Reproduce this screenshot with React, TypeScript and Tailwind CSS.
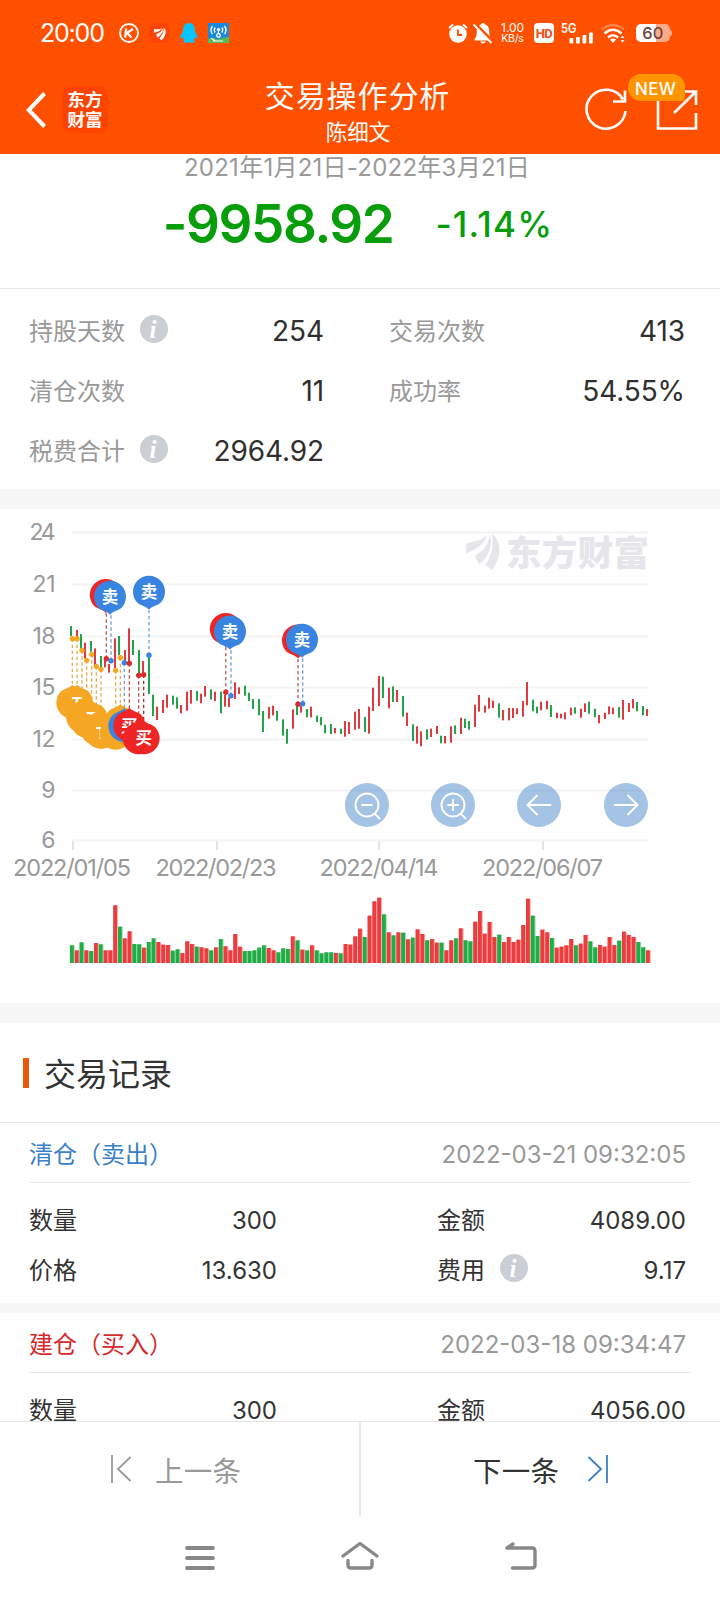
import React from "react";

type Tone = "r" | "g";
type Candle = [number, Tone, number, number];

const RED = "#e0393e";
const GREEN = "#22a548";

/* x, tone, high and low of every day, in chart pixels */
const parse = (src: string, ox: number, oy: number): Candle[] =>
  src.split(" ").map((s) => {
    const [x, tone, a, b] = s.split(",");
    return [ox + +x / 3, tone as Tone, oy + +a / 3, oy + +b / 3];
  });

const candles: Candle[] = [
  ...parse(
    "93,g,198,228 111,r,210,235 123,g,222,265 135,r,248,295 153,g,243,275 165,r,265,315 183,g,288,322 195,r,300,322 207,r,312,338 225,r,235,325 237,g,228,285 255,r,270,305 267,r,205,305 279,g,240,285 297,g,270,345 309,r,303,345 327,g,287,402 339,g,404,468 351,r,440,480 369,r,420,459 381,r,404,443 399,g,407,434 411,g,412,446 423,r,435,460 441,r,395,452 453,r,390,431 471,g,393,422 483,r,401,430 495,r,378,410 513,g,388,419 525,r,395,423 543,g,395,460 555,r,405,440 567,r,413,441 585,r,367,417 597,r,382,402",
    40,
    51,
  ),
  ...parse(
    "165,g,287,317 177,g,308,333 189,g,327,357 207,g,327,376 219,g,363,426 237,r,351,386 249,r,347,376 261,g,363,392 279,g,388,437 291,g,417,461 309,r,358,416 321,g,348,375 333,r,348,368 351,g,357,382 363,r,350,382 381,g,377,396 393,g,381,406 405,g,404,430 423,g,402,432 435,r,414,430 453,g,416,432 465,r,393,440 477,r,396,432 495,r,365,419 507,r,357,416 525,g,381,426 537,r,350,431 549,r,293,363 567,r,258,348 579,g,260,324 597,r,293,355 609,g,289,336 621,r,300,336 639,g,318,380 651,r,368,408 669,g,403,453 681,r,409,461 693,r,424,469 711,g,418,449 723,r,416,441 741,r,408,432 753,g,437,460 765,r,438,460 783,r,409,458 795,g,406,432",
    190,
    81,
  ),
  ...parse(
    "93,r,653,702 105,g,656,684 117,g,663,689 135,r,614,681 147,r,585,635 165,r,617,638 177,r,593,626 189,r,602,624 207,g,610,653 219,r,630,661 237,r,624,661 249,r,624,654 261,r,625,643 279,r,603,650 291,r,546,616 309,g,599,634 321,g,620,640 333,r,605,631 351,r,602,628 363,g,615,651 381,r,638,655 393,r,641,655 405,r,637,658 423,r,623,646 435,g,622,641 453,r,626,653 465,r,610,636 477,g,605,641 495,g,626,652 507,r,645,670 525,r,638,657 537,r,619,643 549,r,623,643 567,g,621,653 579,r,600,659 597,r,609,636 609,r,597,625 621,g,606,634 639,g,618,646 651,r,627,648",
    430,
    -9,
  ),
];

const volumes =
  "g526 r541 g517 r541 g543 r519 g523 r541 r541 r406 g470 r505 r484 g522 g523 r533 g516 g505 r516 r524 r525 g542 g538 r549 r514 r522 g530 r532 r535 g541 r532 g507 r529 r541 r492 r530 g543 g543 g541 g533 g526 r534 r541 g547 g535 g537 r499 g511 r539 g541 r526 g541 g550 g547 g547 r549 g550 r522 r524 r499 r476 g501 r437 r394 r383 g433 r487 g496 r487 g488 r508 g503 r478 r492 g511 r507 r518 g518 r541 r511 g505 r475 g511 g514 r455 r423 r491 r456 r501 g494 r516 r501 r516 r509 r465 r386 g437 g498 r479 r487 g504 r533 r530 r526 r507 g526 r521 r495 g514 g532 r525 r530 r501 r525 g512 r485 r495 r501 g516 g532 r541"
    .split(" ")
    .map((s) => ({ tone: s[0] as Tone, h: (579 - +s.slice(1)) / 3 }));

const BLUE = "#3884e0";
const GOLD = "#f5a623";
const BUY = "#ee2524";

type Mark = { x: number; y: number; dot: number; dotX?: number; fill: string; label?: string; up?: boolean; line?: string };

/* trade marks hanging above or below the dots on the price line */
const g = (x: number, dot: number, y: number, fill = GOLD, label = "", line?: string): Mark => ({
  x: 40 + x / 3,
  dot: 51 + dot / 3,
  y: 51 + y / 3,
  fill,
  label,
  up: true,
  line,
});
const marks: Mark[] = [
  g(97, 236, 428),
  g(111, 236, 428, GOLD, "T"),
  g(126, 271, 470),
  g(140, 301, 485),
  g(155, 283, 475, GOLD, "T"),
  g(169, 319, 508),
  g(183, 328, 518, GOLD, "T"),
  g(227, 331, 521),
  g(241, 293, 486),
  g(253, 308, 498, BLUE, ""),
  g(268, 310, 497, BUY, "买", "#c9504e"),
  g(296, 346, 535, BUY, "", "#c9504e"),
  g(311, 344, 535, BUY, "买", "#8f3434"),
  { x: 105.8, y: 86, dot: 149.7, dotX: 106.3, fill: BUY, line: "#b55a5a" },
  { x: 110, y: 87.7, dot: 151.7, dotX: 111, fill: BLUE, label: "卖" },
  { x: 149, y: 82.7, dot: 146.3, fill: BLUE, label: "卖" },
  { x: 225.8, y: 120, dot: 183.3, fill: BUY, line: "#b55a5a" },
  { x: 230, y: 122.6, dot: 186.7, dotX: 231, fill: BLUE, label: "卖" },
  { x: 298, y: 131.5, dot: 195.3, fill: BUY, line: "#b55a5a" },
  { x: 302, y: 130.7, dot: 194.7, dotX: 302.7, fill: BLUE, label: "卖" },
];

const grid: [number, string][] = [
  [23, "24"],
  [75, "21"],
  [127, "18"],
  [178, "15"],
  [230, "12"],
  [281, "9"],
  [331, "6"],
];
const ticks: [number, number, string, number][] = [
  [73, 72, "2022/01/05", 118],
  [217, 216, "2022/02/23", 121],
  [379, 379, "2022/04/14", 119],
  [543, 542.5, "2022/06/07", 121],
];

function Fan({ className }: { className: string }) {
  return (
    <svg viewBox="0 0 102 110" className={className} fill="currentColor">
      <path d="M0 30C16 22 44 25 63 4C56 34 30 44 0 60Z" />
      <path d="M26 66C50 52 68 36 71 2C84 34 64 76 40 92C34 84 30 76 26 66Z" />
      <path d="M58 93C78 70 84 34 78 0C96 12 102 30 101 54C98 78 90 94 78 110C72 104 64 98 58 93Z" />
    </svg>
  );
}

function Chart() {
  return (
    <svg width="720" height="494" viewBox="0 0 720 494" className="block">
      {grid.map(([y, t]) => (
        <g key={t}>
          <rect x="72" y={y - 0.5} width="576" height="2" fill="#f4f4f5" />
          <text x="55.500" y={y + 8} textAnchor="end" fontSize="23" fill="#999" textLength={t.length > 1 ? (t === "24" ? 26 : 23) : undefined}>
            {t}
          </text>
        </g>
      ))}
      {ticks.map(([x, c, t, w]) => (
        <g key={t}>
          <rect x={x - 1} y="332" width="2" height="9" fill="#e6e6e6" />
          <text x={c} y="367" textAnchor="middle" fontSize="23.5" fill="#999" textLength={w}>
            {t}
          </text>
        </g>
      ))}
      <text x="506" y="57" fontSize="35.5" fontWeight="900" fill="#e6e6ea" textLength="143">
        东方财富
      </text>
      {candles.map(([x, tone, a, b], i) => (
        <rect key={i} x={Math.round(x - 1)} y={a} width="2" height={b - a} fill={tone === "r" ? RED : GREEN} />
      ))}
      {volumes.map(({ tone, h }, i) => (
        <g key={i} fill={tone === "r" ? "#ee3c3e" : "#21ad46"}>
          <rect x={70 + i * 4.8} y={454 - h} width="4.8" height={h} opacity="0.4" />
          <rect x={70 + i * 4.8} y={454 - h} width="3.8" height={h} />
        </g>
      ))}
      {marks.map((m, i) => (
        <g key={i}>
          <line
            x1={m.dotX ?? m.x}
            x2={m.dotX ?? m.x}
            y1={m.dot}
            y2={m.y}
            stroke={m.line ?? (m.fill === GOLD ? "#e3ac52" : "#6a9fdc")}
            strokeWidth="1.3"
            strokeDasharray="3.4 2.6"
          />
          <circle cx={m.dotX ?? m.x} cy={m.dot} r="2.7" fill={m.fill === BUY ? "#d92c2f" : m.fill} />
        </g>
      ))}
      {marks.map((m, i) => (
        <g key={i} transform={`translate(${m.x} ${m.y})`}>
          <path
            d="M0 18C-3 14.600-7 14.400-11 11.600A16 16 0 1 1 11 11.600C7 14.400 3 14.600 0 18Z"
            fill={m.fill}
            transform={m.up ? "scale(1 -1)" : undefined}
          />
          {m.label ? (
            <text x="0" y="6" textAnchor="middle" fontSize="16.500" fontWeight="700" fill="#fff">
              {m.label}
            </text>
          ) : null}
        </g>
      ))}
    </svg>
  );
}

function Info() {
  return (
    <span className="-mt-1.5 ml-[15px] flex h-7 w-7 items-center justify-center rounded-full bg-[#cbced5] pr-0.5 font-['Liberation_Serif',serif] text-[25px] leading-none font-bold text-white italic">
      i
    </span>
  );
}

function Stat({ label, value, info }: { label: string; value: string; info?: boolean }) {
  return (
    <div className="flex h-[60px] items-center">
      <span className="text-[#999]">{label}</span>
      {info && <Info />}
      <span className="-mt-0.5 ml-auto text-[28px] tracking-[-0.1px] text-[#2f2f2f]">{value}</span>
    </div>
  );
}

function Field({ label, value, info }: { label: string; value: string; info?: boolean }) {
  return (
    <div className="flex h-[50px] items-center text-[#333]">
      <span>{label}</span>
      {info && <Info />}
      <span className="ml-auto">{value}</span>
    </div>
  );
}

function TradeRecord({ title, tone, time, children }: { title: string; tone: string; time: string; children: React.ReactNode }) {
  return (
    <section>
      <div className={`mr-[29px] ml-[29px] flex h-[60px] items-center justify-between border-b border-[#e8e8e8] pt-1 pr-[5px] ${tone}`}>
        <h3>{title}</h3>
        <time className="text-[#999]">{time}</time>
      </div>
      <div className="grid grid-cols-[248px_249px] justify-between pt-[13px] pr-[34px] pb-[7px] pl-[29px]">{children}</div>
    </section>
  );
}

function RoundButton({ label, children }: { label: string; children: React.ReactNode }) {
  return (
    <button aria-label={label} className="h-11 w-11 rounded-full bg-[#3f80c8]/47">
      <svg viewBox="0 0 44 44" className="h-11 w-11" fill="none" stroke="#fff" strokeWidth="1.900" strokeLinecap="round">
        {children}
      </svg>
    </button>
  );
}

function StatusBar() {
  return (
    <div className="flex h-[66px] items-center pl-10 text-white">
      <span className="w-[79px] text-[25px] font-normal tracking-[-1.200px]">20:00</span>
      <svg width="20" height="20" viewBox="0 0 20 20" fill="none" stroke="#fff" strokeWidth="1.800">
        <circle cx="10" cy="10" r="9" />
        <path d="M7.200 5.500L6.200 14.500M14 5.800L8 10L12.500 14.500" strokeWidth="2.200" />
      </svg>
      <span className="ml-2.5 flex h-5 w-5 items-center justify-center rounded-sm bg-[#fe4408]">
        <Fan className="h-[13px] w-[13px] rotate-12" />
      </span>
      <svg width="18" height="20" viewBox="0 0 18 20" className="ml-[11px]" fill="#08c4ff">
        <path d="M9 0C5 0 3 3 3.200 7C3.200 9 .8 11 .2 14C0 16 1 16 2.700 13.800C3 15.500 3.600 16.600 4.600 17.500C3 18 2.800 19 3.500 19.500C5 20 7.800 19.800 9 19C10.200 19.800 13 20 14.500 19.500C15.200 19 15 18 13.400 17.500C14.400 16.600 15 15.500 15.300 13.800C17 16 18 16 17.800 14C17.200 11 14.800 9 14.800 7C15 3 13 0 9 0Z" />
      </svg>
      <svg width="21" height="20" viewBox="0 0 21 20" className="ml-2.5">
        <rect width="21" height="20" fill="#1c88dc" />
        <path d="M0 16L5 14.500L9 16.500L14 15L21 14V20H0Z" fill="#57bd5c" />
        <path d="M5 18H15M3 15.500L7 17.500" stroke="#fff" strokeWidth="1.200" />
        <g fill="none" stroke="#fff" strokeWidth="1.300">
          <path d="M4.500 3Q1.500 7 4.500 11M7.200 4.500Q5.200 7 7.200 9.500M16.500 3Q19.500 7 16.500 11M13.800 4.500Q15.800 7 13.800 9.500M10.500 7V11" />
          <circle cx="10.500" cy="12.500" r="1.800" />
        </g>
        <circle cx="10.500" cy="6.500" r="1.600" fill="#fff" />
      </svg>

      <svg width="20" height="21" viewBox="0 0 20 21" className="ml-[219px]">
        <circle cx="10" cy="11" r="8.800" fill="#fff" />
        <path d="M1 5L5 1.500M19 5L15 1.500" stroke="#fff" strokeWidth="2" />
        <path d="M10 6.500V12H14" fill="none" stroke="#ff5000" strokeWidth="1.800" />
      </svg>
      <svg width="20" height="21" viewBox="0 0 20 21" className="ml-[5px]">
        <path d="M10 0C11 0 11.500 .5 11.700 1.200C15 2 16.300 5 16.300 9C16.300 13 17 14.500 18.500 16V17.500H1.500V16C3 14.500 3.700 13 3.700 9C3.700 5 5 2 8.300 1.200C8.500 .5 9 0 10 0Z" fill="#fff" />
        <path d="M7 18.500H13Q12 20.500 10 20.500T7 18.500Z" fill="#fff" />
        <path d="M2 .5L20 19" stroke="#ff5000" strokeWidth="3" />
        <path d="M.5 1.500L18.500 20" stroke="#fff" strokeWidth="1.800" />
      </svg>
      <span className="ml-[7px] flex w-[25px] flex-col items-center text-[10.500px] leading-[11px] font-normal">
        <span className="text-[12px] tracking-[-0.100px]">1.00</span>
        <span className="tracking-[-0.200px]">KB/s</span>
      </span>
      <span className="ml-[9px] flex h-5 w-5 items-center justify-center rounded-[4px] bg-white font-['Roboto',sans-serif] text-[13px] font-extrabold tracking-[-0.5px] text-[#f4511e]">
        HD
      </span>
      <svg width="33" height="21" viewBox="0 0 33 21" className="ml-[7px] overflow-visible" fill="#fff">
        <text x="0" y="9.500" fontSize="12.500" fontWeight="600" textLength="15.500" lengthAdjust="spacingAndGlyphs">
          5G
        </text>
        <rect x="8.500" y="15" width="3.800" height="5.500" rx="1" />
        <rect x="15" y="14" width="3.800" height="6.500" rx="1" />
        <rect x="21.500" y="12" width="3.800" height="8.500" rx="1" />
        <rect x="28" y="9.500" width="3.800" height="11" rx="1" />
      </svg>
      <svg width="26" height="21" viewBox="0 0 26 21" className="ml-[7px]" fill="none" stroke="#fff" strokeWidth="2.400">
        <path d="M1 6.500Q12 -2.500 23 6.500" opacity="0.300" />
        <path d="M3.500 10.500Q12 3 20.500 10.500M7 14.500Q12 10 17 14.500" />
        <path d="M9 16.500Q12 14.500 15 16.500L12 20Z" fill="#fff" stroke="none" />
        <path d="M19.500 15L21.500 12.500L23.500 15ZM19.500 17L21.500 19.500L23.500 17Z" fill="#fff" stroke="none" />
      </svg>
      <div className="ml-[9px] flex h-[18px] w-[34px] items-center justify-center rounded-[5px] bg-[linear-gradient(90deg,#fff_60%,#ffaa86_60%)] text-[16.500px] font-medium tracking-[0.2px] text-[#6b4338]">
        60
      </div>
      <span className="h-1.5 w-[2px] rounded-r bg-[#ffaa86]" />
    </div>
  );
}

function AppHeader() {
  return (
    <header className="h-[154px] shrink-0 bg-[#ff5000] text-white">
      <StatusBar />
      <div className="flex h-[88px] items-start">
        <svg width="20" height="36" viewBox="0 0 20 36" className="mt-[26px] ml-[26px]" fill="none" stroke="#fff" strokeWidth="4">
          <path d="M18.500 1.500L2.800 18L18.500 34.500" />
        </svg>
        <div className="mt-5 ml-4 flex h-[47px] w-[46px] flex-col items-center justify-center rounded-[9px] bg-[#ff4300] text-[17.500px] leading-[20px] font-bold">
          <span>东方</span>
          <span>财富</span>
        </div>
        <div className="mt-[8px] ml-[105px] w-[284px] text-center">
          <h1 className="pl-[5px] text-[30px] leading-[44px] tracking-[0.9px]">交易操作分析</h1>
          <p className="pl-[6px] text-[21.500px] leading-[29px]">陈细文</p>
        </div>
        <svg width="44" height="44" viewBox="0 0 44 44" className="mt-[21px] ml-[88px]" fill="none" stroke="#fff" strokeWidth="2.600">
          <path d="M40.500 24A19.500 19.500 0 1 1 38 12.500M40 3.500V14.500H28" />
        </svg>
        <div className="relative mt-[21px] ml-[26px] h-11 w-11">
          <svg width="44" height="44" viewBox="0 0 44 44" fill="none" stroke="#fff" strokeWidth="2.600">
            <path d="M3 12V41.500H41V26M28 4.500H41V18M41 4.500L19 26" />
          </svg>
          <span className="absolute -top-[13px] -left-[27px] flex h-[27px] w-[57px] items-center justify-center rounded-[13px] rounded-br-[3px] bg-[#ff9500] pt-[3px] pr-[2px] text-[17px] font-medium tracking-[0.3px]">
            NEW
          </span>
        </div>
      </div>
    </header>
  );
}

export default function App() {
  return (
    <div className="flex h-[1600px] w-[720px] flex-col overflow-hidden bg-white font-['Inter','Noto_Sans_CJK_SC',sans-serif] text-[24px] leading-none font-normal">
      <AppHeader />

      <main className="h-[1267px] shrink-0 overflow-hidden">
        <section className="flex h-[135px] flex-col items-center border-b border-[#e8e8e8]">
          <p className="pt-0.5 pr-[6px] leading-6 tracking-[0.25px] text-[#999]">2021年1月21日-2022年3月21日</p>
          <div className="mt-[18px] flex h-[52px] items-center pr-1 text-[#089d0b]">
            <strong className="text-[53px] font-semibold tracking-[-1.400px]">-9958.92</strong>
            <span className="ml-[42px] text-[35px] font-medium tracking-[1.200px]">-1.14%</span>
          </div>
        </section>

        <section className="grid h-[200px] grid-cols-[295px_296px] content-start justify-between pt-[13px] pr-[35px] pl-[29px]">
          <Stat label="持股天数" value="254" info />
          <Stat label="交易次数" value="413" />
          <Stat label="清仓次数" value="11" />
          <Stat label="成功率" value="54.55%" />
          <Stat label="税费合计" value="2964.92" info />
        </section>

        <div className="h-5 bg-[#f7f7f7]" />

        <section className="relative h-[494px]">
          <Chart />
          <Fan className="absolute top-[25px] left-[466px] h-9 w-[34px] text-[#e6e6ea]" />
          <div className="absolute top-[274px] left-[345px] flex gap-[42px]">
            <RoundButton label="缩小">
              <circle cx="22" cy="22" r="11.500" />
              <path d="M17 22H27M30 31L34.500 35.500" />
            </RoundButton>
            <RoundButton label="放大">
              <circle cx="22" cy="22" r="11.500" />
              <path d="M17 22H27M22 17V27M30 31L34.500 35.500" />
            </RoundButton>
            <RoundButton label="向左">
              <path d="M33.500 22H11M20 12.500L10.500 22L20 31.500" />
            </RoundButton>
            <div className="pl-px">
              <RoundButton label="向右">
                <path d="M10.500 22H33M24 12.500L33.500 22L24 31.500" />
              </RoundButton>
            </div>
          </div>
        </section>

        <div className="h-5 bg-[#f7f7f7]" />

        <h2 className="flex h-[100px] items-center border-b border-[#e8e8e8] pl-[23px] text-[32px] text-[#333]">
          <span className="mr-[15px] h-[30px] w-1.5 bg-[#e8590c]" />
          <span className="pt-[5px]">交易记录</span>
        </h2>

        <TradeRecord title="清仓（卖出）" tone="text-[#3a7fc8]" time="2022-03-21 09:32:05">
          <Field label="数量" value="300" />
          <Field label="金额" value="4089.00" />
          <Field label="价格" value="13.630" />
          <Field label="费用" value="9.17" info />
        </TradeRecord>
        <div className="h-2.5 bg-[#f7f7f7]" />
        <TradeRecord title="建仓（买入）" tone="text-[#d62a2a]" time="2022-03-18 09:34:47">
          <Field label="数量" value="300" />
          <Field label="金额" value="4056.00" />
        </TradeRecord>
      </main>

      <footer className="flex h-[95px] shrink-0 border-t border-[#e6e6e6] text-[28.500px] tracking-[0.2px]">
        <button className="flex w-[361px] items-center border-r-2 border-[#ebebeb] pl-[110px] text-[#999]">
          <svg width="22" height="28" viewBox="0 0 22 28" className="mr-[23px]" fill="none" stroke="currentColor" strokeWidth="1.800">
            <path d="M2 0V28M20.500 2L8 14L20.500 26" />
          </svg>
          <span className="pt-1.5">上一条</span>
        </button>
        <button className="flex flex-1 items-center pl-[112px] text-[#333]">
          <span className="pt-1.5">下一条</span>
          <svg width="22" height="28" viewBox="0 0 22 28" className="ml-[28px] text-[#3a7fc8]" fill="none" stroke="currentColor" strokeWidth="1.800">
            <path d="M20 0V28M1.500 2L14 14L1.500 26" />
          </svg>
        </button>
      </footer>

      <nav className="flex h-[84px] justify-between pt-6 pr-[182px] pl-[184px] text-[#888]">
        <svg width="32" height="32" viewBox="0 0 32 32" fill="none" stroke="currentColor" strokeWidth="3.800" strokeLinecap="round">
          <path d="M3 8H29M3 18H29M3 28H29" />
        </svg>
        <svg width="40" height="32" viewBox="0 0 40 32" fill="none" stroke="currentColor" strokeWidth="3.400" strokeLinecap="round" strokeLinejoin="round">
          <path d="M3 16L20 3.500L37 16M8 20.500V25Q8 28 11 28H29Q32 28 32 25V20.500" />
        </svg>
        <svg width="34" height="32" viewBox="0 0 34 32" fill="none" stroke="currentColor" strokeWidth="3.400" strokeLinecap="round" strokeLinejoin="round">
          <path d="M9 4L3 8H28Q31 8 31 11V25Q31 28 28 28H8.500" />
        </svg>
      </nav>
    </div>
  );
}
